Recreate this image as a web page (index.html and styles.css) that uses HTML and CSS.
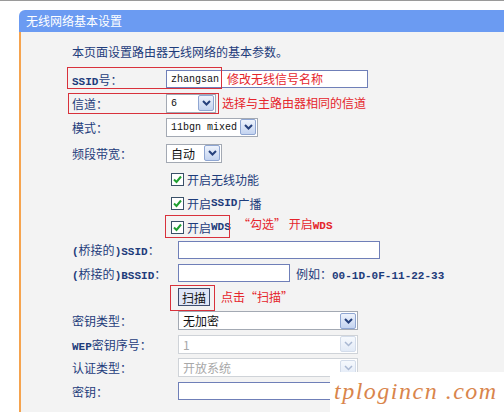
FILE: index.html
```html
<!DOCTYPE html>
<html lang="zh-CN">
<head>
    <meta charset="UTF-8">
    <meta name="viewport" content="width=device-width, initial-scale=1.0">
    <title>无线网络基本设置</title>
    <link rel="stylesheet" href="styles.css">
</head>
<body>
    <div class="topline"></div>
    <div class="panel">
        <div class="title">无线网络基本设置</div>
        <div class="content">
            <p class="intro">本页面设置路由器无线网络的基本参数。</p>

            <div class="form basic">
                <div class="row">
                    <span class="label"><span class="lat">SSID</span>号：</span>
                    <span class="input ssid mono">zhangsan</span>
                </div>
                <div class="row">
                    <span class="label">信道：</span>
                    <span class="select ch">
                        <span class="val mono">6</span>
                        <span class="arrow"><svg width="9" height="6" viewBox="0 0 9 6"><path d="M1 1 L4.5 4.5 L8 1" fill="none" stroke="#25407c" stroke-width="2"/></svg></span>
                    </span>
                </div>
                <div class="row">
                    <span class="label">模式：</span>
                    <span class="select mode">
                        <span class="val mono">11bgn mixed</span>
                        <span class="arrow"><svg width="9" height="6" viewBox="0 0 9 6"><path d="M1 1 L4.5 4.5 L8 1" fill="none" stroke="#25407c" stroke-width="2"/></svg></span>
                    </span>
                </div>
                <div class="row">
                    <span class="label">频段带宽：</span>
                    <span class="select band">
                        <span class="val">自动</span>
                        <span class="arrow"><svg width="9" height="6" viewBox="0 0 9 6"><path d="M1 1 L4.5 4.5 L8 1" fill="none" stroke="#25407c" stroke-width="2"/></svg></span>
                    </span>
                </div>
            </div>

            <div class="checks">
                <label class="check"><svg width="13" height="13" viewBox="0 0 13 13"><rect x="0.5" y="0.5" width="12" height="12" fill="#fff" stroke="#3a5068"/><path d="M3 6.5 L5.5 9 L10 3.5" fill="none" stroke="#21a032" stroke-width="2"/></svg>开启无线功能</label>
                <label class="check"><svg width="13" height="13" viewBox="0 0 13 13"><rect x="0.5" y="0.5" width="12" height="12" fill="#fff" stroke="#3a5068"/><path d="M3 6.5 L5.5 9 L10 3.5" fill="none" stroke="#21a032" stroke-width="2"/></svg>开启<span class="lat">SSID</span>广播</label>
                <label class="check"><svg width="13" height="13" viewBox="0 0 13 13"><rect x="0.5" y="0.5" width="12" height="12" fill="#fff" stroke="#3a5068"/><path d="M3 6.5 L5.5 9 L10 3.5" fill="none" stroke="#21a032" stroke-width="2"/></svg>开启<span class="lat">WDS</span></label>
            </div>

            <div class="form bridge">
                <div class="row">
                    <span class="label"><span class="lat">(</span>桥接的<span class="lat">)SSID</span>：</span>
                    <span class="input long"></span>
                </div>
                <div class="row">
                    <span class="label"><span class="lat">(</span>桥接的<span class="lat">)BSSID</span>：</span>
                    <span class="input short"></span>
                    <span class="hint">例如：<span class="lat">00-1D-0F-11-22-33</span></span>
                </div>
                <div class="row">
                    <span class="label"></span>
                    <button class="scan">扫描</button>
                </div>
                <div class="row">
                    <span class="label">密钥类型：</span>
                    <span class="select keytype">
                        <span class="val">无加密</span>
                        <span class="arrow"><svg width="9" height="6" viewBox="0 0 9 6"><path d="M1 1 L4.5 4.5 L8 1" fill="none" stroke="#25407c" stroke-width="2"/></svg></span>
                    </span>
                </div>
                <div class="row">
                    <span class="label"><span class="lat">WEP</span>密钥序号：</span>
                    <span class="select keytype off">
                        <span class="val">1</span>
                        <span class="arrow"><svg width="9" height="6" viewBox="0 0 9 6"><path d="M1 1 L4.5 4.5 L8 1" fill="none" stroke="#a9b8d2" stroke-width="1.5"/></svg></span>
                    </span>
                </div>
                <div class="row">
                    <span class="label">认证类型：</span>
                    <span class="select keytype off">
                        <span class="val">开放系统</span>
                        <span class="arrow"><svg width="9" height="6" viewBox="0 0 9 6"><path d="M1 1 L4.5 4.5 L8 1" fill="none" stroke="#a9b8d2" stroke-width="1.5"/></svg></span>
                    </span>
                </div>
                <div class="row">
                    <span class="label">密钥：</span>
                    <span class="input long"></span>
                </div>
            </div>

            <!-- red annotations drawn over the form -->
            <div class="mark m-ssid"></div>
            <div class="note n-ssid">修改无线信号名称</div>
            <div class="mark m-ch"></div>
            <div class="note n-ch">选择与主路由器相同的信道</div>
            <div class="mark m-wds"></div>
            <div class="note n-wds">“勾选” 开启<span class="lat">WDS</span></div>
            <div class="mark m-scan"></div>
            <div class="note n-scan">点击“扫描”</div>
        </div>
    </div>
    <div class="watermark">tplogincn .com</div>
</body>
</html>
```

FILE: styles.css
```css
body {
    margin: 0;
    background-color: #fff;
    font-family: "Noto Sans CJK SC", "Liberation Sans", sans-serif;
    font-size: 12px;
    color: #1e3c7b;
    position: relative;
    height: 412px;
    overflow: hidden;
}
.topline {
    height: 9px;
    border-top: 1px solid #9a9a9a;
}
.panel {
    margin-left: 19px;
}
.title {
    height: 22px;
    line-height: 22px;
    padding-left: 7px;
    background-color: #6b9bf2;
    color: #fff;
    font-size: 12px;
    border-top-left-radius: 6px;
}
.content {
    position: relative;
    box-sizing: border-box;
    height: 380px;
    padding: 8px 0 0 51px;
    background-color: #f3f3f3;
    border-left: 2px solid #f5a34e;
}
.intro {
    margin: 0 0 3px;
    line-height: 24px;
}
.mono {
    font-family: "Liberation Mono", monospace;
    font-size: 10px;
    color: #111;
}
.lat {
    font-family: "Liberation Mono", monospace;
    font-size: 11px;
    font-weight: bold;
}
.row {
    display: flex;
    align-items: center;
    height: 24px;
}
.basic .label {
    width: 94px;
}
.basic .row:last-child {
    margin-top: 2px;
}
.bridge {
    margin-top: -1px;
}
.bridge .row {
    height: 23.6px;
}
.bridge .label {
    width: 106px;
}
.label {
    flex: none;
    white-space: nowrap;
}
.input {
    box-sizing: border-box;
    display: flex;
    align-items: center;
    height: 18px;
    padding-left: 4px;
    background-color: #fff;
    border: 1px solid #6f7fb8;
}
.ssid { width: 202px; }
.long { width: 202px; }
.short { width: 112px; }
.hint {
    margin-left: 6px;
}
.select {
    box-sizing: border-box;
    display: flex;
    align-items: center;
    justify-content: space-between;
    height: 19px;
    padding: 0 1px 0 4px;
    background-color: #fff;
    border: 1px solid #a3a9b3;
    color: #111;
}
.ch { width: 50px; }
.mode { width: 92px; }
.band { width: 56px; }
.keytype { width: 180px; }
.arrow {
    box-sizing: border-box;
    display: flex;
    align-items: center;
    justify-content: center;
    width: 16px;
    height: 16px;
    background: linear-gradient(#eef3fc, #c3d3f0);
    border: 1px solid #8fa6d2;
    border-radius: 2px;
}
.off {
    border-color: #cfd3d8;
    color: #a8a8a8;
}
.off .arrow {
    background: linear-gradient(#f6f9fd, #e2eaf6);
    border-color: #d3dcea;
}
.checks {
    margin: 2px 0 0 99px;
}
.check {
    display: flex;
    align-items: center;
    height: 24px;
}
.check svg {
    margin-right: 3px;
}
.scan {
    height: 18px;
    width: 32px;
    padding: 0;
    font-family: "Noto Sans CJK SC", sans-serif;
    font-size: 12px;
    color: #111;
    background-color: #dfe5f7;
    border: 1px solid #3d4c6e;
}
.mark {
    position: absolute;
    border: 1px solid #d8313b;
}
.note {
    position: absolute;
    color: #e5252c;
    line-height: 14px;
    white-space: nowrap;
}
.m-ssid { left: 46px; top: 35px; width: 153px; height: 20px; }
.n-ssid { left: 206px; top: 40px; }
.m-ch { left: 47px; top: 61px; width: 149px; height: 19px; }
.n-ch { left: 201px; top: 64px; }
.m-wds { left: 144px; top: 183px; width: 63px; height: 21px; }
.n-wds { left: 217px; top: 185px; }
.m-scan { left: 149px; top: 253px; width: 43px; height: 24px; }
.n-scan { left: 200px; top: 258px; }
.watermark {
    position: absolute;
    right: 0;
    bottom: 0;
    width: 174px;
    height: 40px;
    padding-left: 4px;
    box-sizing: border-box;
    background-color: #fff;
    color: #d9854c;
    font-family: "Liberation Serif", serif;
    font-style: italic;
    font-size: 24px;
    line-height: 38px;
    letter-spacing: 1.5px;
    white-space: nowrap;
}
```
